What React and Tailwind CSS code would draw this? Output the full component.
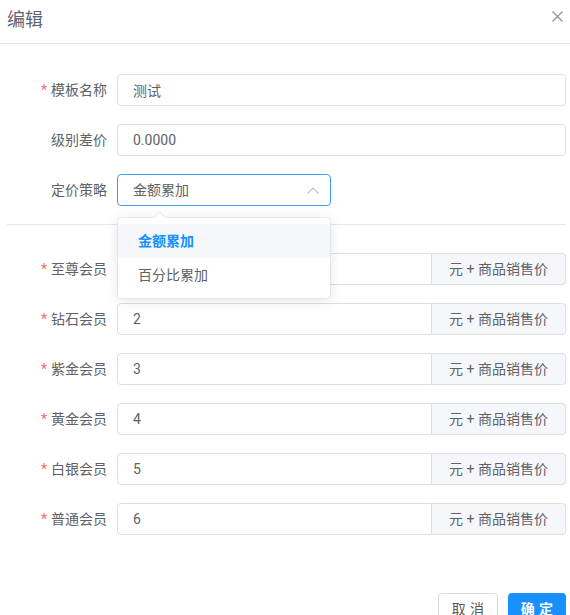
import { useState } from 'react';

const levels = [
  { name: '至尊会员', value: '1' },
  { name: '钻石会员', value: '2' },
  { name: '紫金会员', value: '3' },
  { name: '黄金会员', value: '4' },
  { name: '白银会员', value: '5' },
  { name: '普通会员', value: '6' },
];

const FormRow = ({ label, required, children }) => (
  <div className="flex items-center h-[32px] mb-[18px]">
    <label className="w-[110px] shrink-0 pr-[10px] text-right text-[14px] text-[#606266]">
      {required && <span className="text-[#f56c6c] mr-[4px]">*</span>}
      {label}
    </label>
    <div className="flex-1 h-full">{children}</div>
  </div>
);

const TextInput = ({ value }) => (
  <input
    defaultValue={value}
    className="w-full h-full px-[15px] rounded-[4px] border border-[#dcdfe6] bg-white text-[14px] text-[#606266] outline-none"
  />
);

const App = () => {
  const [strategy] = useState('金额累加');

  return (
    <div className="w-[570px] h-[615px] overflow-hidden bg-white font-['Roboto','Noto_Sans_CJK_SC',sans-serif]">
      <div className="h-[44px] flex items-center justify-between pl-[7px] pr-[7px] border-b border-[#e8e8e8]">
        <h2 className="text-[18px] text-[#5e6370] leading-none -mt-[4px]">编辑</h2>
        <button className="-mt-[10px] text-[#909399]">
          <svg width="11" height="11" viewBox="0 0 11 11" fill="none" stroke="currentColor" strokeWidth="1.2">
            <line x1="0.5" y1="0.5" x2="10.5" y2="10.5" />
            <line x1="10.5" y1="0.5" x2="0.5" y2="10.5" />
          </svg>
        </button>
      </div>

      <div className="pt-[30px] pl-[7px] pr-[4px]">
        <FormRow label="模板名称" required>
          <TextInput value="测试" />
        </FormRow>
        <FormRow label="级别差价">
          <TextInput value="0.0000" />
        </FormRow>
        <FormRow label="定价策略">
          <div className="relative w-[214px] h-full">
            <div className="h-full flex items-center justify-between pl-[15px] pr-[11px] rounded-[4px] border border-[#409eff] text-[14px] text-[#606266]">
              <span>{strategy}</span>
              <svg width="12" height="7" viewBox="0 0 12 7" fill="none" stroke="#c0c4cc" strokeWidth="1.2">
                <polyline points="0.5,6.5 6,1 11.5,6.5" />
              </svg>
            </div>
            <div className="absolute z-10 left-0 top-[43px] w-[214px] py-[6px] bg-white border border-[#e4e7ed] rounded-[4px] shadow-[0_2px_12px_rgba(0,0,0,0.1)]">
              <div className="absolute -top-[5px] left-[37px] w-[9px] h-[9px] rotate-45 bg-white border-t border-l border-[#e4e7ed]" />
              <div className="relative h-[34px] flex items-center px-[20px] bg-[#f5f7fa] text-[14px] font-bold text-[#1890ff]">
                金额累加
              </div>
              <div className="h-[34px] flex items-center px-[20px] text-[14px] text-[#606266]">
                百分比累加
              </div>
            </div>
          </div>
        </FormRow>

        <div className="h-px bg-[#e4e7ed] mb-[28px]" />

        {levels.map((lv) => (
          <FormRow key={lv.name} label={lv.name} required>
            <div className="flex h-full">
              <input
                defaultValue={lv.value}
                className="flex-1 min-w-0 h-full px-[15px] rounded-l-[4px] border border-[#dcdfe6] bg-white text-[14px] text-[#606266] outline-none"
              />
              <div className="w-[134px] shrink-0 h-full flex items-center justify-center rounded-r-[4px] border border-l-0 border-[#dcdfe6] bg-[#f5f7fa] text-[14px] text-[#606266]">
                元 + 商品销售价
              </div>
            </div>
          </FormRow>
        ))}

        <div className="flex justify-end gap-[10px] mt-[58px]">
          <button className="w-[60px] h-[32px] rounded-[4px] border border-[#d9d9d9] bg-white text-[14px] text-[#595959] tracking-[0.3em] pl-[4px]">
            取消
          </button>
          <button className="w-[58px] h-[32px] rounded-[4px] bg-[#1890ff] text-[14px] text-white font-bold tracking-[0.3em] pl-[4px]">
            确定
          </button>
        </div>
      </div>
    </div>
  );
};

export default App;
